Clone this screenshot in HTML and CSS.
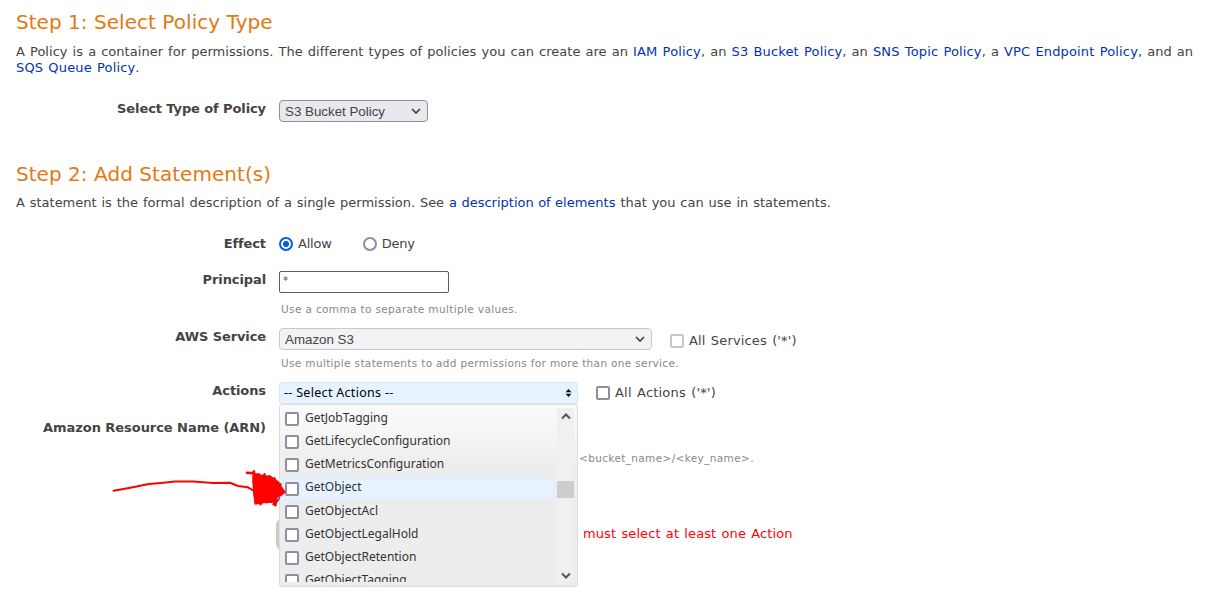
FILE: index.html
```html
<!DOCTYPE html>
<html lang="en">
<head>
<meta charset="utf-8">
<title>AWS Policy Generator</title>
<link rel="stylesheet" href="styles.css">
</head>
<body>
<main class="page">
  <h2 class="step-title">Step 1: Select Policy Type</h2>
  <p class="intro">A Policy is a container for permissions. The different types of policies you can create are an <a>IAM Policy</a>, an <a>S3 Bucket Policy</a>, an <a>SNS Topic Policy</a>, a <a>VPC Endpoint Policy</a>, and an<br><a>SQS Queue Policy</a>.</p>

  <div class="row row-type">
    <div class="label">Select Type of Policy</div>
    <div class="field"><div class="select select-type"><span>S3 Bucket Policy</span><svg class="chevron" viewBox="0 0 10 6"><path d="M1 1l4 4 4-4"/></svg></div></div>
  </div>

  <h2 class="step-title">Step 2: Add Statement(s)</h2>
  <p class="intro intro-second">A statement is the formal description of a single permission. See <a>a description of elements</a> that you can use in statements.</p>

  <div class="row row-effect">
    <div class="label">Effect</div>
    <div class="field radios">
      <span class="choice"><i class="radio checked"></i>Allow</span>
      <span class="choice"><i class="radio"></i>Deny</span>
    </div>
  </div>

  <div class="row row-principal">
    <div class="label">Principal</div>
    <div class="field"><div class="input">*</div><div class="hint hint-comma">Use a comma to separate multiple values.</div></div>
  </div>

  <div class="row row-service">
    <div class="label">AWS Service</div>
    <div class="field">
      <div class="line"><div class="select select-service"><span>Amazon S3</span><svg class="chevron" viewBox="0 0 10 6"><path d="M1 1l4 4 4-4"/></svg></div>
      <span class="choice all-services"><i class="box disabled"></i><span>All Services ('*')</span></span></div>
      <div class="hint hint-service">Use multiple statements to add permissions for more than one service.</div>
    </div>
  </div>

  <div class="row row-actions">
    <div class="label">Actions</div>
    <div class="field">
      <div class="line">
        <div class="multi">
          <div class="multi-head"><span>-- Select Actions --</span><svg class="updown" viewBox="0 0 7 8"><path d="M3.500 0L6.500 3.200H.5zM3.500 8L.5 4.800h6z"/></svg></div>
          <div class="menu">
            <ul class="options">
              <li><i class="box"></i><span>GetJobTagging</span></li>
              <li><i class="box"></i><span>GetLifecycleConfiguration</span></li>
              <li><i class="box"></i><span>GetMetricsConfiguration</span></li>
              <li class="hover"><i class="box"></i><span>GetObject</span></li>
              <li><i class="box"></i><span>GetObjectAcl</span></li>
              <li><i class="box"></i><span>GetObjectLegalHold</span></li>
              <li><i class="box"></i><span>GetObjectRetention</span></li>
              <li><i class="box"></i><span>GetObjectTagging</span></li>
            </ul>
            <div class="scrollbar">
              <svg class="arrow" viewBox="0 0 10 7"><path d="M1 5.500l4-4 4 4"/></svg>
              <div class="thumb"></div>
              <svg class="arrow" viewBox="0 0 10 7"><path d="M1 1.500l4 4 4-4"/></svg>
            </div>
          </div>
        </div>
        <span class="choice all-actions"><i class="box"></i><span>All Actions ('*')</span></span>
      </div>
    </div>
  </div>

  <div class="row row-arn">
    <div class="label label-arn">Amazon Resource Name (ARN)</div>
    <div class="field"><div class="hint hint-arn">&lt;bucket_name&gt;/&lt;key_name&gt;.</div></div>
  </div>

  <div class="submit"><div class="button"></div><span class="error">must select at least one Action</span></div>
</main>

<svg class="annotation" viewBox="0 0 190 50">
  <path class="blue" d="M168.500 36.500l2-4"/>
  <path class="stroke" d="M4.500 25.800L20 23L40 19L52 18L66 16.600L84 16.500L104 18L121 17.800L129 21L139 22.300L145 26"/>
  <path class="blob" d="M144.500 8.500L152 10.500L162 12L169 17L172 22L175.500 27L172 30L167 32L163 37L156 37L147 38.500L145 27z"/>
  <path class="scribble" d="M138 7.800l6 .5 1-2-.5 10 2 22 3-29 1 28 5-28-4 30 9-28-3 26 8-24-1 23 7-17-7 20 2 1 1-7"/>
</svg>
</body>
</html>
```
FILE: styles.css
```css
* { box-sizing: border-box; }
body {
  margin: 0;
  background: #fff;
  color: #444;
  font: 13px/16px Verdana, "DejaVu Sans", sans-serif;
  overflow: hidden;
}
.page { height: 596px; padding: 10px 0 0; overflow: hidden; white-space: nowrap; }
.step-title { margin: 0 16px; font-size: 20px; line-height: 24px; font-weight: 400; letter-spacing: .04px; color: #e47911; }
.intro { margin: 10px 16px 0; word-spacing: .9px; letter-spacing: .03px; }
.intro a { letter-spacing: .15px; }
a { color: #0033b0; }
.row { display: grid; grid-template-columns: 266px 1fr; column-gap: 13px; align-items: start; }
.label { padding-top: 1px; text-align: right; font-weight: 700; font-size: 13px; letter-spacing: -.1px; }
.label-arn { letter-spacing: -.05px; }
.line { display: flex; align-items: flex-start; }

.row-type { height: 62px; margin-top: 24px; }
.intro-second { margin-top: 9px; word-spacing: .8px; letter-spacing: -.02px; }
.intro-second a { word-spacing: .3px; letter-spacing: 0; }
.row-effect { height: 36px; margin-top: 24px; }
.row-principal { height: 57px; }
.row-service { height: 54px; }
.row-actions { height: 37px; }
.row-arn { height: 100px; }

.select {
  display: flex; align-items: center; justify-content: space-between;
  height: 22px; padding: 0 6px 0 5px;
  border: 1px solid #8f8f9d; border-radius: 4px;
  background: #e9e9ed;
  font: 13.333px/20px Arial, "Liberation Sans", sans-serif;
}
.select span { padding-top: 2px; }
.select-type { width: 149px; }
.select-service { width: 373px; border-color: #c7c7ce; background: #f3f3f6; }
.chevron { width: 10px; height: 6px; fill: none; stroke: #444; stroke-width: 1.7; }

.radios { display: flex; gap: 31px; padding-top: 1px; }
.choice { display: flex; align-items: center; letter-spacing: -.2px; }
.radio { width: 14px; height: 14px; margin-right: 5px; border: 2px solid #8f8f9d; border-radius: 50%; }
.radio.checked { border-color: #0060df; background: radial-gradient(circle, #0060df 2.700px, #fff 3.400px); }
.box { flex: none; width: 14px; height: 14px; border: 2px solid #8f8f9d; border-radius: 2px; background: #fff; }
.box.disabled { border-color: #c7c7ce; }

.input { width: 170px; height: 22px; padding: 0 3px; border: 1px solid #5b5b66; border-radius: 2px; font-size: 10px; line-height: 18px; }
.hint { color: #888; font-size: 10.500px; line-height: 12px; padding-left: 2px; letter-spacing: .36px; }
.hint-comma { margin-top: 10px; }
.hint-service { margin-top: 7px; letter-spacing: .34px; }
.hint-arn { margin: 33px 0 0 298px; }
.all-services, .all-actions { margin: 5px 0 0 18px; gap: 5px; letter-spacing: .15px; word-spacing: 1px; }
.all-actions { margin-top: 3px; letter-spacing: .2px; }

.multi { position: relative; width: 299px; }
.multi-head {
  display: flex; align-items: center; justify-content: space-between;
  height: 22px; padding: 0 5px 0 4px;
  border: 1px solid #d5e8fa; border-radius: 3px;
  background: #e6f2ff; color: #000;
  font: 12.500px/20px "Trebuchet MS", "Noto Sans", sans-serif;
  letter-spacing: .3px;
}
.updown { width: 7px; height: 8px; fill: #111; }
.menu {
  position: absolute; z-index: 2; top: 22px; left: 0;
  display: flex; justify-content: space-between;
  width: 299px; height: 183px; padding: 3px 3px 4px;
  border: 1px solid #ddd; border-radius: 3px;
  background: linear-gradient(#fafafa 0, #f5f5f5 30px, #ededed 60px, #ededed 100%);
}
.options {
  width: 271px; height: 174px; margin: 0; padding: 0; overflow: hidden; list-style: none;
  color: #333; font: 12px/18px "Trebuchet MS", "Noto Sans", sans-serif;
}
.options li { display: flex; height: 23.200px; gap: 6px; padding-left: 1px; border: 1px solid transparent; border-radius: 3px; }
.options .box { margin-top: 3px; }
.options .hover { background: #e6f2ff; border-color: #dfedfa; position: relative; top: -1px; }
.options .hover .box { margin-top: 4px; }
.scrollbar {
  display: flex; flex-direction: column; align-items: center;
  width: 17px; height: 174px; padding: 5px 0 3px; background: #f0f0f0;
}
.arrow { width: 10px; height: 7px; fill: none; stroke: #555; stroke-width: 2; }
.thumb { width: 17px; height: 17px; margin: 61px 0 auto; background: #cdcdcd; }

.submit { display: flex; padding-left: 276px; }
.button { width: 60px; height: 31px; border-radius: 6px; background: #ccc; }
.error { margin: 7px 0 0 247px; color: #ff0008; word-spacing: 1px; letter-spacing: .1px; }

.annotation { position: absolute; z-index: 3; left: 109px; top: 465px; width: 190px; height: 50px; fill: none; stroke-linecap: round; stroke-linejoin: round; }
.annotation .stroke { stroke: red; stroke-width: 2; }
.annotation .blob { fill: red; stroke: red; stroke-width: 2; }
.annotation .scribble { stroke: red; stroke-width: 2.400; }
.annotation .blue { stroke: #2350b5; stroke-width: 1.500; }
```
